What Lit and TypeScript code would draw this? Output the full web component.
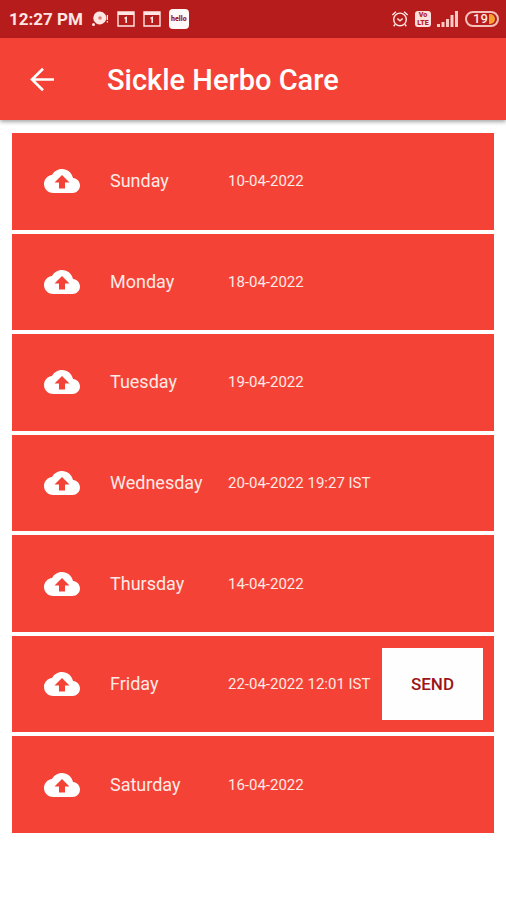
import { LitElement, html, css, svg, nothing } from "lit";
import { customElement } from "lit/decorators.js";

interface DayEntry {
  day: string;
  date: string;
  sendable?: boolean;
}

const ENTRIES: DayEntry[] = [
  { day: "Sunday", date: "10-04-2022" },
  { day: "Monday", date: "18-04-2022" },
  { day: "Tuesday", date: "19-04-2022" },
  { day: "Wednesday", date: "20-04-2022 19:27 IST" },
  { day: "Thursday", date: "14-04-2022" },
  { day: "Friday", date: "22-04-2022 12:01 IST", sendable: true },
  { day: "Saturday", date: "16-04-2022" },
];

const calendar = svg`
  <path d="M1 1h16v14H1z" fill="none" stroke="currentColor" stroke-width="1.4"/>
  <path d="M1 1h16v3H1z" fill="currentColor"/>
  <path d="M7.500 7.500L9.200 6.600V12" fill="none" stroke="currentColor" stroke-width="1.6"/>`;

@customElement("status-bar")
class StatusBar extends LitElement {
  static styles = css`
    :host {
      display: flex;
      align-items: center;
      justify-content: space-between;
      height: 38px;
      padding: 0 7px 0 9px;
      background: #b71c1c;
      color: #ffe6e2;
    }
    .group {
      display: flex;
      align-items: center;
    }
    .left {
      gap: 8px;
    }
    .right {
      gap: 6px;
    }
    .time {
      font-size: 17px;
      line-height: 20px;
      font-weight: 700;
    }
    svg {
      display: block;
    }
    .app {
      width: 20px;
      height: 20px;
      border-radius: 4px;
      background: #fffafa;
      color: #a01818;
      font-size: 7px;
      line-height: 20px;
      font-weight: 900;
      text-align: center;
    }
    .volte {
      width: 16px;
      height: 16px;
      border-radius: 3px;
      background: #ffe0dc;
      color: #b71c1c;
      font-size: 7px;
      line-height: 8px;
      font-weight: 900;
      text-align: center;
    }
    .volte span {
      display: block;
    }
    .battery {
      display: flex;
      align-items: center;
      justify-content: center;
      gap: 1px;
      box-sizing: border-box;
      width: 34px;
      height: 16px;
      border: 2px solid #f5c0ba;
      border-radius: 8px;
      font-size: 13px;
      line-height: 12px;
      font-weight: 500;
      padding-left: 4px;
    }
  `;

  render() {
    return html`
      <div class="group left">
        <span class="time">12:27 PM</span>
        <svg width="18" height="18" viewBox="0 0 18 18" fill="currentColor" aria-hidden="true">
          <path d="M9 1.500a6.500 6.500 0 1 1-3.600 12A6.500 6.500 0 0 1 9 1.500z"/>
          <circle cx="2.500" cy="14.500" r="1.500"/>
          <path d="M15.800 5H17v5h-1.200zM15.800 11H17v1.500h-1.200z"/>
          <circle cx="9" cy="8" r="1.800" fill="#d8807a"/>
        </svg>
        <svg width="18" height="16" viewBox="0 0 18 16" aria-hidden="true">${calendar}</svg>
        <svg width="18" height="16" viewBox="0 0 18 16" aria-hidden="true">${calendar}</svg>
        <span class="app">hello</span>
      </div>
      <div class="group right">
        <svg width="18" height="18" viewBox="0 0 20 20" fill="none" stroke="currentColor" stroke-width="1.600" aria-hidden="true">
          <circle cx="10" cy="10.500" r="7"/>
          <path d="M1.500 5.500L5.500 2M18.500 5.500L14.500 2M7 9.500l3 2.500 3-2.500M4.500 16L3 18M15.500 16l1.500 2"/>
        </svg>
        <span class="volte"><span>Vo</span><span>LTE</span></span>
        <svg width="22" height="16" viewBox="0 0 22 16" fill="#ffc8c2" aria-hidden="true">
          <path d="M0 13h3v3H0zM4.500 11h3v5h-3zM9 8h3v8H9zM13.500 4h3v12h-3zM18 0h3v16h-3z"/>
        </svg>
        <span class="battery">19
          <svg width="6" height="10" viewBox="0 0 6 10" aria-hidden="true">
            <path d="M0 0h1a5 5 0 0 1 0 10H0z" fill="#f5a030"/>
          </svg>
        </span>
      </div>
    `;
  }
}

@customElement("day-row")
class DayRow extends LitElement {
  static properties = { entry: { attribute: false } };
  declare entry: DayEntry;

  static styles = css`
    :host {
      display: grid;
      grid-template-columns: 66px 118px 1fr auto;
      align-items: center;
      padding: 12px 11px 12px 32px;
      background: #f44336;
      color: #ffe9e6;
    }
    svg {
      display: block;
    }
    .day {
      font-size: 18px;
      line-height: 24px;
    }
    .date {
      font-size: 15px;
      line-height: 20px;
      white-space: nowrap;
    }
    button {
      width: 101px;
      height: 72px;
      border: 0;
      padding: 0;
      background: #fffefe;
      color: #9c1418;
      font: 500 17px/20px Roboto, sans-serif;
    }
  `;

  render() {
    const { day, date, sendable } = this.entry;
    return html`
      <svg width="36" height="36" viewBox="0 0 24 24" fill="#fff" aria-hidden="true">
        <path
          d="M19.350 10.040C18.670 6.590 15.640 4 12 4 9.110 4 6.600 5.640 5.350 8.040 2.340 8.360 0 10.910 0 14c0 3.310 2.690 6 6 6h13c2.760 0 5-2.240 5-5 0-2.640-2.050-4.780-4.650-4.960zM14 13v4h-4v-4H7l5-5 5 5h-3z"
        />
      </svg>
      <span class="day">${day}</span>
      <span class="date">${date}</span>
      ${sendable ? html`<button type="button">SEND</button>` : nothing}
    `;
  }
}

@customElement("app-root")
class AppRoot extends LitElement {
  static styles = css`
    :host {
      display: flex;
      flex-direction: column;
      min-height: 100vh;
      background: #fff;
      font-family: Roboto, sans-serif;
    }
    header {
      display: flex;
      align-items: center;
      gap: 51px;
      padding: 22px 28px 20px;
      background: #f44336;
      color: #fff;
      box-shadow: 0 2px 4px rgba(0, 0, 0, 0.35);
    }
    .back {
      display: block;
      padding: 0;
      border: 0;
      background: none;
      color: inherit;
    }
    .back svg {
      display: block;
    }
    h1 {
      margin: 0;
      font-size: 29px;
      line-height: 40px;
      font-weight: 500;
    }
    ul {
      display: grid;
      grid-auto-rows: 1fr;
      gap: 4px;
      min-height: 700px;
      margin: 13px 12px;
      padding: 0;
      list-style: none;
    }
    li {
      display: grid;
    }
  `;

  render() {
    return html`
      <status-bar></status-bar>
      <header>
        <button class="back" type="button" aria-label="Back">
          <svg width="28" height="28" viewBox="0 0 28 28" fill="none" stroke="currentColor" stroke-width="2.600">
            <path d="M26 13.500H4M15 2.800L4 13.500l11 10.700"/>
          </svg>
        </button>
        <h1>Sickle Herbo Care</h1>
      </header>
      <main>
        <ul>
          ${ENTRIES.map((entry) => html`<li><day-row .entry=${entry}></day-row></li>`)}
        </ul>
      </main>
    `;
  }
}
